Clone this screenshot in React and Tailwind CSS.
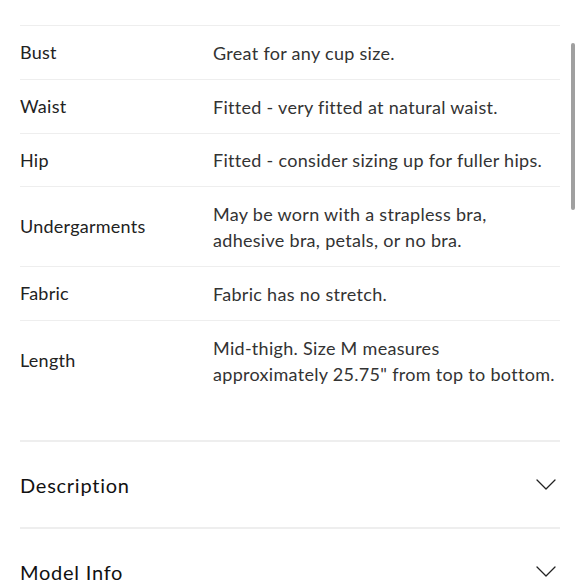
import React from 'react'

const rows = [
  { label: 'Bust', value: ['Great for any cup size.'], h: 'h-[54px]' },
  { label: 'Waist', value: ['Fitted - very fitted at natural waist.'], h: 'h-[54px]' },
  { label: 'Hip', value: ['Fitted - consider sizing up for fuller hips.'], h: 'h-[53px]' },
  { label: 'Undergarments', value: ['May be worn with a strapless bra,', 'adhesive bra, petals, or no bra.'], h: 'h-[80px]' },
  { label: 'Fabric', value: ['Fabric has no stretch.'], h: 'h-[54px]' },
  { label: 'Length', value: ['Mid-thigh. Size M measures', 'approximately 25.75" from top to bottom.'], h: 'h-[80px]' },
]

function Chevron() {
  return (
    <svg width="20" height="11" viewBox="0 0 20 11" fill="none" className="mr-[4px]">
      <path d="M1 1L10 10L19 1" stroke="#222" strokeWidth="1.3" strokeLinecap="round" strokeLinejoin="round" />
    </svg>
  )
}

export default function App() {
  return (
    <div className="relative w-[580px] h-[580px] overflow-hidden bg-white" style={{ fontFamily: 'Lato, "Open Sans", sans-serif' }}>
      <div className="px-[20px] pt-[25px] w-[580px]">
        {rows.map((r) => (
          <div key={r.label} className={`flex items-center border-t border-[#eeeeee] ${r.h}`}>
            <div className="w-[193px] shrink-0 text-[18px] tracking-[0.25px] text-[#222]">{r.label}</div>
            <div className="text-[18px] tracking-[0.3px] leading-[26px] text-[#333]">
              {r.value.map((v) => (
                <div key={v} className="whitespace-nowrap">{v}</div>
              ))}
            </div>
          </div>
        ))}
        <div className="h-[40px]" />
        <div className="flex items-center justify-between border-t-2 border-[#eeeeee] h-[87px]">
          <span className="text-[20px] tracking-[0.75px] text-[#111]">Description</span>
          <Chevron />
        </div>
        <div className="flex items-center justify-between border-t-2 border-[#eeeeee] h-[87px]">
          <span className="text-[20px] tracking-[0.75px] text-[#111]">Model Info</span>
          <Chevron />
        </div>
      </div>
      <div className="absolute left-[571px] top-[43px] w-[4px] h-[167px] rounded-full bg-[#a0a0a0]" />
    </div>
  )
}
